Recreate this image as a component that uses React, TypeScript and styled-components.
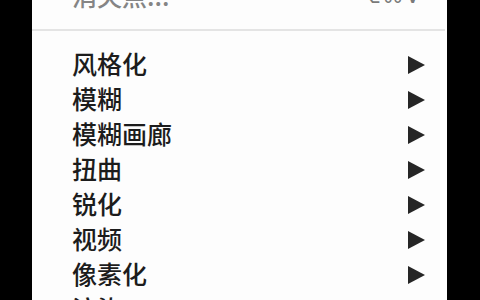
import styled, { createGlobalStyle } from 'styled-components';

const GlobalStyle = createGlobalStyle`
  html, body {
    margin: 0;
    padding: 0;
    background: #000;
  }
  body {
    font-family: "Noto Sans CJK SC", "Noto Sans", sans-serif;
  }
`;

const Screen = styled.div`
  width: 480px;
  height: 300px;
  overflow: hidden;
  background: #000;
`;

const Menu = styled.ul`
  list-style: none;
  width: 415px;
  margin: -21px 0 0 32px;
  padding: 0;
  background: #fdfdfd;
`;

const Item = styled.li<{ $disabled?: boolean }>`
  display: flex;
  align-items: center;
  justify-content: space-between;
  height: 35px;
  padding: 0 22px 0 40px;
  font-size: 25px;
  font-weight: 500;
  line-height: 35px;
  color: ${(p) => (p.$disabled ? '#858585' : '#1c1c1c')};
`;

const Label = styled.span`
  position: relative;
  top: -1px;
`;

const Shortcut = styled.span`
  font-family: "DejaVu Sans", sans-serif;
  font-size: 21px;
  letter-spacing: 2px;
  margin-right: 3px;
  color: #7a7a7a;
`;

const Separator = styled.li`
  height: 33px;
  display: flex;
  align-items: center;
  &::after {
    content: '';
    position: relative;
    top: -1px;
    flex: 1;
    height: 2px;
    margin-right: 2px;
    background: #e4e4e4;
  }
`;

const Arrow = () => (
  <svg width="17" height="18" viewBox="0 0 17 18">
    <polygon points="0,0 17,9 0,18" fill="#262626" />
  </svg>
);

const submenus = ['风格化', '模糊', '模糊画廊', '扭曲', '锐化', '视频', '像素化', '渲染'];

const App = () => {
  return (
    <>
      <GlobalStyle />
      <Screen>
        <Menu>
          <Item $disabled>
            <Label>消失点...</Label>
            <Shortcut>⌥⌘V</Shortcut>
          </Item>
          <Separator />
          {submenus.map((name) => (
            <Item key={name}>
              <Label>{name}</Label>
              <Arrow />
            </Item>
          ))}
        </Menu>
      </Screen>
    </>
  );
};

export default App;
